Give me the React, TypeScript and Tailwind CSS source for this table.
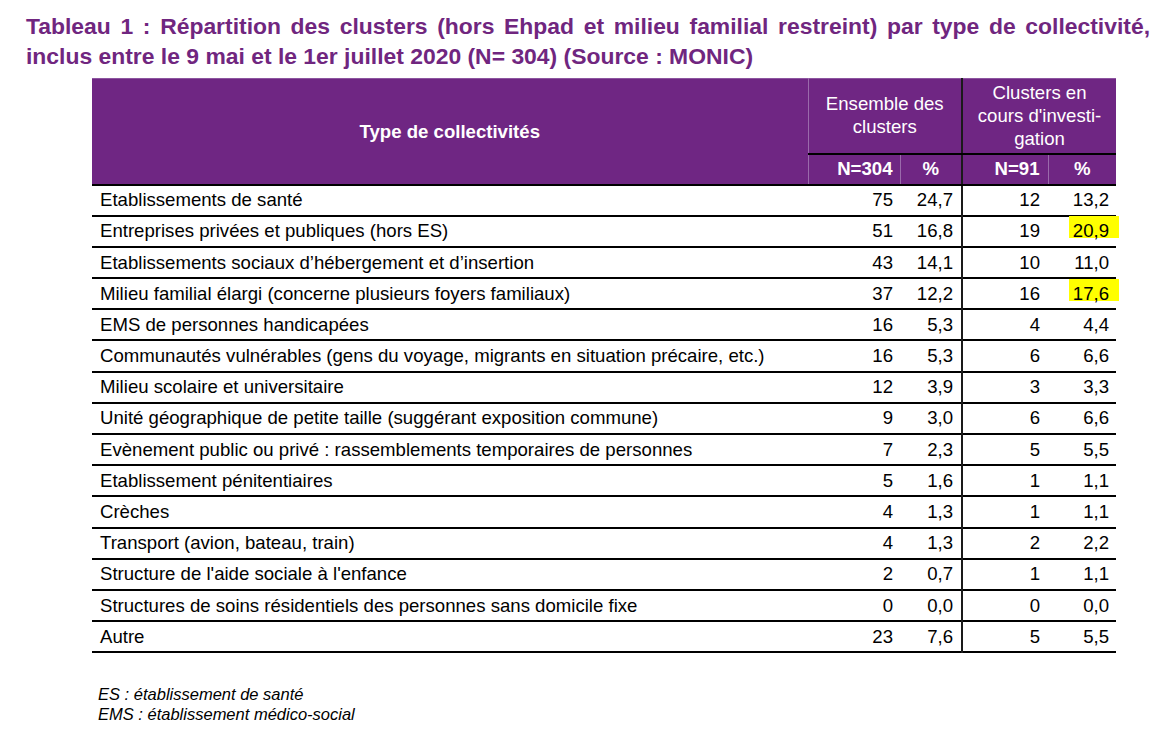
import React from "react";

const rows: [string, string, string, string, string, boolean?][] = [
  ["Etablissements de santé", "75", "24,7", "12", "13,2"],
  ["Entreprises privées et publiques (hors ES)", "51", "16,8", "19", "20,9", true],
  ["Etablissements sociaux d’hébergement et d’insertion", "43", "14,1", "10", "11,0"],
  ["Milieu familial élargi (concerne plusieurs foyers familiaux)", "37", "12,2", "16", "17,6", true],
  ["EMS de personnes handicapées", "16", "5,3", "4", "4,4"],
  ["Communautés vulnérables (gens du voyage, migrants en situation précaire, etc.)", "16", "5,3", "6", "6,6"],
  ["Milieu scolaire et universitaire", "12", "3,9", "3", "3,3"],
  ["Unité géographique de petite taille (suggérant exposition commune)", "9", "3,0", "6", "6,6"],
  ["Evènement public ou privé : rassemblements temporaires de personnes", "7", "2,3", "5", "5,5"],
  ["Etablissement pénitentiaires", "5", "1,6", "1", "1,1"],
  ["Crèches", "4", "1,3", "1", "1,1"],
  ["Transport (avion, bateau, train)", "4", "1,3", "2", "2,2"],
  ["Structure de l'aide sociale à l'enfance", "2", "0,7", "1", "1,1"],
  ["Structures de soins résidentiels des personnes sans domicile fixe", "0", "0,0", "0", "0,0"],
  ["Autre", "23", "7,6", "5", "5,5"],
];

export default function App() {
  return (
    <div className="w-[1175px] h-[739px] bg-white overflow-hidden font-['Liberation_Sans',Arial,sans-serif] text-black">
      <div className="pl-[26px] pr-[25px] pt-[11px] text-[22.9px] leading-[30px] font-bold text-[#70267f]">
        <div className="whitespace-nowrap text-justify [text-align-last:justify]">
          Tableau 1 : Répartition des clusters (hors Ehpad et milieu familial restreint) par type de collectivité,
        </div>
        <div className="whitespace-nowrap">inclus entre le 9 mai et le 1er juillet 2020 (N= 304) (Source : MONIC)</div>
      </div>

      <div className="pl-[92px] mt-[7px]">
        <table className="border-collapse table-fixed w-[1024px] text-[18.6px]">
          <colgroup>
            <col className="w-[716px]" />
            <col className="w-[92px]" />
            <col className="w-[62px]" />
            <col className="w-[86px]" />
            <col className="w-[68px]" />
          </colgroup>
          <thead>
            <tr className="h-[75px] bg-[#6f2683] text-white">
              <th
                rowSpan={2}
                className="font-bold text-center align-middle border-t border-t-[#8d55a0] border-r border-r-[#9a6aab] border-b-2 border-b-black pt-[2px]"
              >
                Type de collectivités
              </th>
              <th
                colSpan={2}
                className="font-normal text-center align-middle leading-[23px] border-t border-t-[#8d55a0] border-r-2 border-r-[#1a1a1a] border-b-2 border-b-black pb-[2px]"
              >
                Ensemble des
                <br />
                clusters
              </th>
              <th
                colSpan={2}
                className="font-normal text-center align-middle leading-[23px] border-t border-t-[#8d55a0] border-b-2 border-b-black"
              >
                Clusters en
                <br />
                cours d'investi-
                <br />
                gation
              </th>
            </tr>
            <tr className="h-[31px] bg-[#6f2683] text-white">
              <th className="font-bold text-right pr-[7px] border-r border-r-[#9a6aab] border-b-2 border-b-black">N=304</th>
              <th className="font-bold text-center border-r-2 border-r-[#1a1a1a] border-b-2 border-b-black">%</th>
              <th className="font-bold text-right pr-[8px] border-r border-r-[#9a6aab] border-b-2 border-b-black">N=91</th>
              <th className="font-bold text-center border-b-2 border-b-black">%</th>
            </tr>
          </thead>
          <tbody>
            {rows.map((r, i) => (
              <tr key={i} className="h-[31.2px] border-b-[2px] border-b-black">
                <td className="pl-[8px] whitespace-nowrap">{r[0]}</td>
                <td className="text-right pr-[7px]">{r[1]}</td>
                <td className="text-right pr-[8px] border-r-2 border-r-[#1a1a1a]">{r[2]}</td>
                <td className="text-right pr-[8px]">{r[3]}</td>
                <td className="text-right pr-[7px]">
                  {r[5] ? (
                    <span className="relative inline-block leading-[21px]">
                      <span className="absolute left-[-4px] right-[-10px] top-[-4px] bottom-[3px] bg-[#ffff00]" />
                      <span className="relative">{r[4]}</span>
                    </span>
                  ) : (
                    r[4]
                  )}
                </td>
              </tr>
            ))}
          </tbody>
        </table>
      </div>

      <div className="pl-[98px] mt-[31px] italic text-[16.5px] leading-[20px]">
        <div>ES : établissement de santé</div>
        <div>EMS : établissement médico-social</div>
      </div>
    </div>
  );
}
